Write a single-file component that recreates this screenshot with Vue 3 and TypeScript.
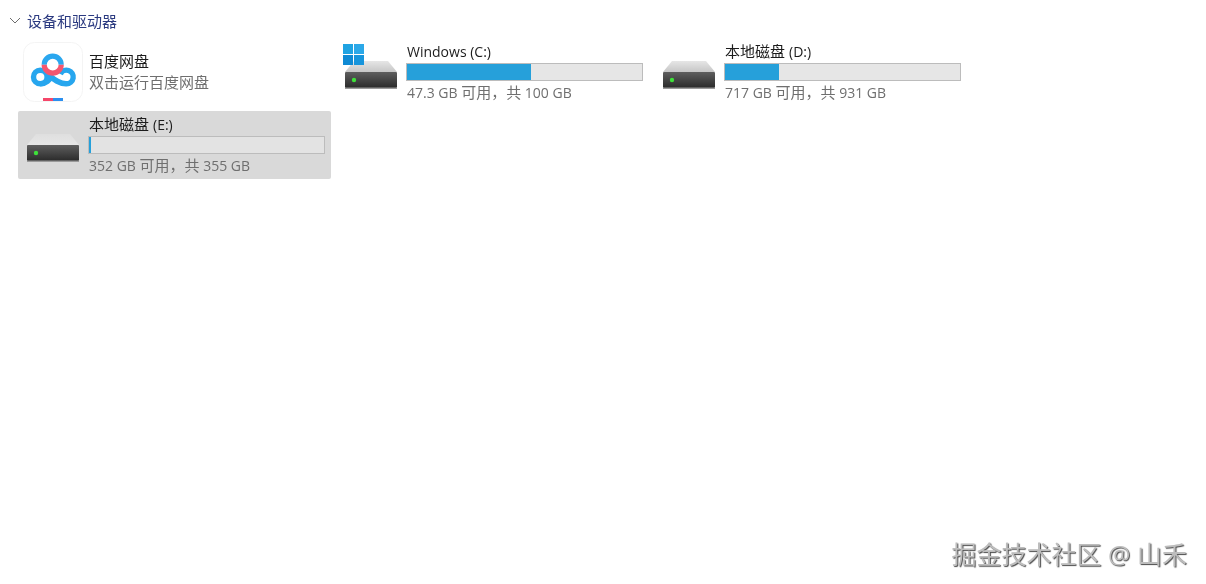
<template>
  <div class="page">
    <div class="groupHead">
      <svg class="chevron" width="12" height="7" viewBox="0 0 12 7">
        <path d="M1 1l5 5 5-5" fill="none" stroke="#6d6d6d" stroke-width="1" />
      </svg>
      <span>设备和驱动器</span>
    </div>

    <div class="grid">
      <div class="tile">
        <div class="appIcon">
          <svg width="60" height="60" viewBox="0 0 60 60">
            <rect x="0.5" y="0.5" width="59" height="59" rx="11" fill="#fff" stroke="#f4f4f4" />
            <g fill="none" stroke="#27a6ee" stroke-width="5.4">
              <circle cx="17.3" cy="35" r="6.8" />
              <path d="M22 30c5 3 11 12 21.3 11.8a6.8 6.8 0 1 0-6-9.8" />
              <path d="M17.3 41.8c6 0 9-4 12-8" />
            </g>
            <path d="M21.2 22.7a8.5 8.5 0 0 1 17 0" fill="none" stroke="#2aa7ef" stroke-width="5.2" />
            <path d="M21.2 22.7a8.5 8.5 0 0 0 17 0" fill="none" stroke="#f5566f" stroke-width="5.2" />
            <rect x="20" y="56" width="10" height="3" fill="#f5466a" />
            <rect x="30" y="56" width="10" height="3" fill="#2b8fef" />
          </svg>
        </div>
        <div class="appText">
          <div class="name cjk">百度网盘</div>
          <div class="sub cjk">双击运行百度网盘</div>
        </div>
      </div>

      <div v-for="d in drives" :key="d.name + d.free" class="tile" :class="{ selected: d.selected }">
        <div class="driveIcon">
          <svg width="54" height="30" viewBox="0 0 54 30">
            <defs>
              <linearGradient :id="'top' + d.free" x1="0" y1="0" x2="0" y2="1">
                <stop offset="0" :stop-color="d.selected ? '#dfdfdf' : '#e6e6e6'" />
                <stop offset="1" :stop-color="d.selected ? '#e6e6e6' : '#c6c6c6'" />
              </linearGradient>
              <linearGradient :id="'front' + d.free" x1="0" y1="0" x2="0" y2="1">
                <stop offset="0" stop-color="#5e5e5e" />
                <stop offset="1" stop-color="#2a2a2a" />
              </linearGradient>
            </defs>
            <path d="M10 1h34l9 11H1z" :fill="'url(#top' + d.free + ')'" />
            <rect x="1" y="12" width="52" height="16" rx="1" :fill="'url(#front' + d.free + ')'" />
            <rect x="1" y="27.5" width="52" height="1.5" fill="#9a9a9a" />
            <circle cx="10" cy="20" r="2.2" fill="#3ee03a" />
          </svg>
          <svg v-if="d.system" class="winLogo" width="21" height="21" viewBox="0 0 21 21">
            <rect width="10" height="10" fill="#1fa3e2" />
            <rect x="11" width="10" height="10" fill="#2ba8e8" />
            <rect y="11" width="10" height="10" fill="#0f8ad4" />
            <rect x="11" y="11" width="10" height="10" fill="#1795dc" />
          </svg>
        </div>
        <div class="driveText">
          <div class="name" :class="{ latin: !d.label }">
            <span v-if="d.label" class="cjk label">{{ d.label }}</span>{{ d.name }}
          </div>
          <div class="bar"><div class="fill" :style="{ width: d.used + '%' }"></div></div>
          <div class="sub">{{ d.free }} GB <span class="cjk">可用，共</span> {{ d.total }} GB</div>
        </div>
      </div>
    </div>

    <div class="watermark">掘金技术社区 @ 山禾</div>
  </div>
</template>

<script setup lang="ts">
interface Drive {
  label?: string
  name: string
  free: string
  total: string
  used: number
  system?: boolean
  selected?: boolean
}

const drives: Drive[] = [
  { name: 'Windows (C:)', free: '47.3', total: '100', used: 52.7, system: true },
  { label: '本地磁盘', name: '(D:)', free: '717', total: '931', used: 23 },
  { label: '本地磁盘', name: '(E:)', free: '352', total: '355', used: 0.9, selected: true },
]
</script>

<style>
html,
body {
  background: #fff;
}
</style>

<style scoped>
.page {
  position: relative;
  width: 1206px;
  height: 584px;
  overflow: hidden;
  background: #fff;
  font-family: "Open Sans", "Noto Sans CJK SC", sans-serif;
  filter: blur(0.3px);
}
.groupHead {
  display: flex;
  align-items: center;
  height: 20px;
  padding: 10px 0 8px 9px;
  color: #2b3a80;
  font-size: 15px;
}
.chevron {
  margin-right: 6px;
}
.grid {
  display: grid;
  grid-template-columns: repeat(3, 313px);
  grid-auto-rows: 68px;
  column-gap: 5px;
  row-gap: 5px;
  padding-left: 18px;
}
.tile {
  display: flex;
  align-items: center;
  border-radius: 2px;
}
.tile.selected {
  background: #d9d9d9;
}
.appIcon {
  display: flex;
  width: 60px;
  height: 60px;
  margin-left: 5px;
  margin-right: 6px;
}
.driveIcon {
  position: relative;
  display: flex;
  width: 54px;
  height: 30px;
  margin: 6px 9px 0 8px;
}
.winLogo {
  position: absolute;
  left: -1px;
  top: -16px;
}
.appText {
  display: flex;
  flex-direction: column;
  gap: 1px;
  margin-top: -1px;
}
.driveText {
  display: flex;
  flex-direction: column;
  width: 237px;
  height: 62px;
}
.name {
  height: 20px;
  color: #1c1c1c;
  font-size: 14px;
  line-height: 20px;
  white-space: nowrap;
}
.name.latin {
  line-height: 22px;
}
.sub {
  height: 20px;
  color: #6f6f6f;
  font-size: 14px;
  line-height: 20px;
  white-space: nowrap;
}
.cjk {
  font-size: 15px;
  line-height: 20px;
}
.label {
  margin-right: 4px;
}
.bar {
  box-sizing: border-box;
  height: 18px;
  margin: 2px 1px 1px -1px;
  background: #e6e6e6;
  border: 1px solid #bcbcbc;
}
.fill {
  height: 100%;
  background: #26a0da;
}
.selected .bar {
  background: #e3e3e3;
}
.watermark {
  position: absolute;
  right: 19px;
  bottom: 14px;
  color: #bdbdbd;
  font-size: 25px;
  line-height: 32px;
  text-shadow: 1px 1px 1px #4a4a4a;
  white-space: nowrap;
}
</style>
